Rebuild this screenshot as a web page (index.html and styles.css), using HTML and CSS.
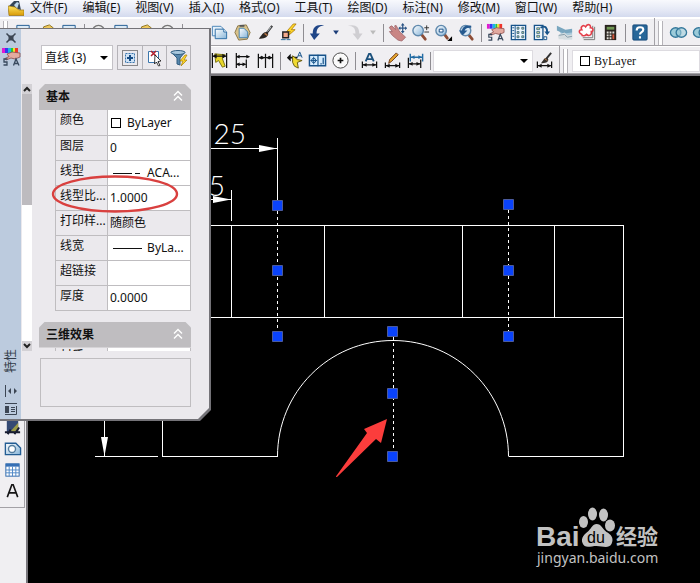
FILE: index.html
```html
<!DOCTYPE html>
<html lang="zh-CN">
<head>
<meta charset="utf-8">
<title>CAD</title>
<link rel="stylesheet" href="styles.css">
</head>
<body>
<svg class="defs" aria-hidden="true">
  <defs>
    <linearGradient id="gBlue" x1="0" y1="0" x2="1" y2="1"><stop offset="0" stop-color="#fff"/><stop offset="1" stop-color="#86b4d8"/></linearGradient>
    <linearGradient id="gGold" x1="0" y1="0" x2="0" y2="1"><stop offset="0" stop-color="#ffe45c"/><stop offset="1" stop-color="#d89a08"/></linearGradient>
  </defs>
  <symbol id="i-new" viewBox="0 0 20 20"><path d="M3 2.500h13v13H3z" fill="#dceaf5" stroke="#1f5b91"/></symbol>
  <symbol id="i-open" viewBox="0 0 20 20"><path d="M7 4l6-2 4 3-5 10H4z" fill="#f0c95c" stroke="#8e7420"/></symbol>
  <symbol id="i-round" viewBox="0 0 20 20"><circle cx="10" cy="9" r="6.500" fill="#eee" stroke="#777" stroke-width="1.500"/></symbol>
  <symbol id="i-copy" viewBox="0 0 20 20"><path d="M2.500 3.500h9l2 2v8h-11z" fill="#e4f0fa" stroke="#4b84b5"/><path d="M5.500 6.500h9l3 3v7h-12z" fill="url(#gBlue)" stroke="#2a6ba3"/><path d="M14.500 6.500v3h3" fill="#fff" stroke="#2a6ba3"/></symbol>
  <symbol id="i-paste" viewBox="0 0 20 20"><path d="M5 3l9-1 4 8-3 7-9 1-4-8z" fill="#d9c28a" stroke="#8a7544"/><path d="M6.500 5.500h5l4 4v6h-9z" fill="url(#gBlue)" stroke="#4280ae"/><path d="M7 3h5" stroke="#555" stroke-width="2"/></symbol>
  <symbol id="i-brush" viewBox="0 0 20 20"><path d="M17 3l-6 8" stroke="#333" stroke-width="2.200"/><path d="M16 4l-4 5" stroke="#c8d0d8"/><path d="M12 9.500c-4-1-6 3-9 7 5 0 9-1 10-5z" fill="#2c2623"/><path d="M9 11l3 2" stroke="#b57343" stroke-width="1.500"/></symbol>
  <symbol id="i-match" viewBox="0 0 20 20"><path d="M15 1L8 9h4l-3 5 8-7h-4l5-6z" fill="#ffd82a" stroke="#a87400" stroke-width=".8"/><path d="M4 9.500h6v6H4z" fill="#f4aa8b" stroke="#222" stroke-width="1.500"/><path d="M2 17.500h5M8 17.500h4" stroke="#276c9d"/></symbol>
  <symbol id="i-undo" viewBox="0 0 20 20"><path d="M17 2.500C11 3 9 6 9 11H12.500L6.500 18 2 11h3C5 4 9 1 17 2.500z" fill="#1f4587"/></symbol>
  <symbol id="i-redo" viewBox="0 0 20 20"><path d="M3 3c6 0 8 3 8 8H8l5.500 7 5-7H15C15 4 11 1 3 3z" fill="#cfced2"/></symbol>
  <symbol id="i-caret" viewBox="0 0 10 20"><path d="M2 8h6l-3 4z" fill="currentColor"/></symbol>
  <symbol id="i-pan" viewBox="0 0 20 20"><path d="M2 4l2-1 4 4-1-4 1.500-.5 3 5.500 1.500 2 2.500 2 3 3-4 4-4-1-6-5-3-4h3l-3-4z" fill="#c98685" stroke="#9a6066" stroke-width=".8"/><path d="M15.500 1.500v8M11.500 5.500h8" stroke="#2d5585" stroke-width="1.300"/><path d="M15.500 0l2 2.500h-4zM15.500 11l2-2.500h-4zM20 5.500l-2-2v4zM11 5.500l2-2v4z" fill="#2d5585"/></symbol>
  <symbol id="i-zoom" viewBox="0 0 20 20"><path d="M11 12l4 5" stroke="#8d4d36" stroke-width="3" stroke-linecap="round"/><circle cx="7.500" cy="8" r="5.500" fill="url(#gBlue)" stroke="#6089ad" stroke-width="1.500"/><path d="M14 5h5M16.500 2.500v5M14 9.500h5" stroke="#333"/></symbol>
  <symbol id="i-zoomwin" viewBox="0 0 20 20"><path d="M11 12l3 4" stroke="#8d4d36" stroke-width="3" stroke-linecap="round"/><circle cx="7.500" cy="8" r="5.500" fill="url(#gBlue)" stroke="#6089ad" stroke-width="1.500"/><path d="M5.500 6.500h4v3h-4z" fill="#fff" stroke="#174d86"/><path d="M19 14v5h-5z" fill="#000"/></symbol>
  <symbol id="i-zoomprev" viewBox="0 0 20 20"><path d="M12 12l4 5" stroke="#8d4d36" stroke-width="3" stroke-linecap="round"/><circle cx="9" cy="8" r="5.500" fill="#d7e7f4" stroke="#6089ad" stroke-width="1.500"/><path d="M15 3C9 2 6 4 5 8H2l4 5 5-5H8c1-3 4-3 7-3z" fill="#24598f"/></symbol>
  <symbol id="i-props" viewBox="0 0 20 20"><path d="M1 1h3v5H1z" fill="#e11bd0"/><path d="M4 1h3v5H4z" fill="#3737f0"/><path d="M7 1h3v5H7z" fill="#16b7e8"/><path d="M10 1h2v5h-2z" fill="#28c936"/><path d="M12 1h2v5h-2z" fill="#f3e02c"/><path d="M14 1h3v5h-3z" fill="#f0342a"/><path d="M6 7l5-2 8 1v4l-5 2-4-1-5 2-1-1.500 4-2z" fill="#e3aaa0" stroke="#8c4b49" stroke-width=".8"/><path d="M6.500 12H3v3h3v3H2.500M12.500 18.500l2.500-6.500 3 6.500M13.500 16.500h4" fill="none" stroke="#38495d" stroke-width="1.300"/></symbol>
  <symbol id="i-design" viewBox="0 0 20 20"><path d="M2.500 2.500h15v15h-15z" fill="#edf5fb" stroke="#17538a" stroke-width="1.400"/><path d="M6.500 2v16" stroke="#17538a"/><path d="M3.500 5h2M3.500 8h2M3.500 11h2M3.500 14h2" stroke="#17538a"/><path d="M8.500 4.500h2v2h-2zM13.500 4.500h2v2h-2zM8.500 9h2v2h-2zM13.500 9h2v2h-2zM8.500 13.500h2v2h-2zM13.500 13.500h2v2h-2z" fill="#d5df93" stroke="#346184" stroke-width=".9"/></symbol>
  <symbol id="i-tool" viewBox="0 0 20 20"><path d="M2.500 2.500h9v15h-9z" fill="#edf5fb" stroke="#17538a" stroke-width="1.400"/><path d="M5 5h3v2H5zM5 9h3v2H5zM5 13h3v2H5z" fill="#d5df93" stroke="#346184" stroke-width=".8"/><path d="M9 5c5-3 7 0 7 5" fill="none" stroke="#17538a" stroke-width="2"/><path d="M13 9h6l-3 4z" fill="#17538a"/><path d="M12.500 14.500h3v3h-3z" fill="#fff" stroke="#17538a"/></symbol>
  <symbol id="i-sheet" viewBox="0 0 20 20"><path d="M2 3l7 5h9v9H9z" fill="#a8c9da"/><path d="M2 3l9 4 7-1v4l-9 1-7-3z" fill="#79a6bf"/><path d="M3 13l7-3 3 3 5-1v5H4z" fill="#d6dde0"/><path d="M4 13l6-1 3 3 5-1" fill="none" stroke="#829aa8"/></symbol>
  <symbol id="i-cloud" viewBox="0 0 20 20"><path d="M6 17.500h11.500V4M5 15.500h10.500V3" fill="none" stroke="#777"/><path d="M4 12c-4-2-3-5 0-5-2-3 2-6 4-3 2-4 6-2 5 1 4 0 3 4 1 4 1 4-3 5-5 3-2 2-5 2-5 0z" fill="#fff" stroke="#e33d48" stroke-width="1.600"/></symbol>
  <symbol id="i-calc" viewBox="0 0 20 20"><path d="M4 2h12v16H4z" fill="#29231f"/><path d="M6 4h8v3H6z" fill="#6f9653"/><path d="M6 9h2v2H6zM9 9h2v2H9zM12 9h2v2h-2zM6 12h2v2H6zM9 12h2v2H9zM6 15h2v2H6zM9 15h2v2H9z" fill="#e2dfd9"/><path d="M12 12h2v5h-2z" fill="#d0553c"/></symbol>
  <symbol id="i-help" viewBox="0 0 20 20"><rect x="3" y="2" width="15" height="16" rx="1" fill="#276799" stroke="#164a7a"/><path d="M7 8c0-5 7-4 7-1 0 2.500-3.500 2.500-3.500 5M10.500 14v2.200" fill="none" stroke="#fff" stroke-width="2.200"/></symbol>
  <symbol id="i-union" viewBox="0 0 20 20"><ellipse cx="7" cy="10" rx="5.500" ry="5" fill="#9ccbd9" stroke="#34789b" stroke-width="1.400"/><ellipse cx="13" cy="10" rx="5.500" ry="5" fill="#9ccbd9" fill-opacity=".6" stroke="#34789b" stroke-width="1.400"/></symbol>
  <symbol id="i-quick" viewBox="0 0 20 20"><path d="M5 3l11 1-3 4 3 8-3 1-4-7-3 2z" fill="#e8d728" stroke="#777112"/><path d="M2.500 2v16M17.500 2v16M3 5.500h14" stroke="#111" stroke-width="1.300"/><path d="M3 5.500l4-2.500v5zM17 5.500l-4-2.500v5z" fill="#111"/></symbol>
  <symbol id="i-base" viewBox="0 0 20 20"><path d="M3.500 2v16M14 9v9M3 6h14M3 14h10" stroke="#111" stroke-width="1.300"/><path d="M3 6l4-2v4zM18 6l-4-2v4zM3 14l4-2v4zM14 14l-4-2v4z" fill="#111"/></symbol>
  <symbol id="i-cont" viewBox="0 0 20 20"><path d="M2.500 3v15M10 3v15M17.500 3v15M3 7h14" stroke="#111" stroke-width="1.300"/><path d="M3 7l3-2v4zM9 7L6 5v4zM11 7l3-2v4zM17 7l-3-2v4z" fill="#111"/></symbol>
  <symbol id="i-leader" viewBox="0 0 20 20"><path d="M2 7l4-4v3h7v2H6v3z" fill="#111"/><path d="M8 5l5 4 5 1-5 2 1 6-4-2-2-4z" fill="#f1db31" stroke="#665b11"/><path d="M13 7l2.500-6L18 7M14 5h3" fill="none" stroke="#17538a"/></symbol>
  <symbol id="i-tol" viewBox="0 0 20 20"><path d="M1.500 4.500h17v11h-17z" fill="#d6edff" stroke="#17538a" stroke-width="1.500"/><path d="M10.500 4v12M13 13.500h1.500M16 7v7" stroke="#17538a" stroke-width="1.300"/><circle cx="6" cy="10" r="2.300" fill="none" stroke="#17538a"/><path d="M2.500 10h7M6 6v8" stroke="#17538a"/></symbol>
  <symbol id="i-center" viewBox="0 0 20 20"><circle cx="10" cy="10" r="8" fill="#fafafa" stroke="#444"/><path d="M7 10h6M10 7v6" stroke="#111" stroke-width="1.800"/></symbol>
  <symbol id="i-dimtext" viewBox="0 0 20 20"><path d="M6 11L9.500 3h1.500L14.500 11M7 8.500h6" fill="none" stroke="#1d527d" stroke-width="2"/><path d="M2.500 11v7M17.500 11v7M3 14.500h14" stroke="#111" stroke-width="1.300"/><path d="M3 14.500l4-2v4zM17 14.500l-4-2v4z" fill="#111"/></symbol>
  <symbol id="i-dimedit" viewBox="0 0 20 20"><path d="M2.500 12v6M17.500 12v6M3 15.500h14" stroke="#111" stroke-width="1.300"/><path d="M3 15.500l4-2v4zM17 15.500l-4-2v4z" fill="#111"/><path d="M6 13l1-4 7-7 2 2-7 7z" fill="#e3a32c" stroke="#6f3c1e"/></symbol>
  <symbol id="i-dimupd" viewBox="0 0 20 20"><path d="M4.500 3v8M17.500 3v8M5 6.500h12" stroke="#236ca3" stroke-width="1.500"/><path d="M5 6.500l4-2v4zM17 6.500l-4-2v4z" fill="#236ca3"/><path d="M2.500 7v11M15.500 9v9M3 13.500h12" stroke="#111" stroke-width="1.300"/><path d="M3 13.500l4-2v4zM15 13.500l-4-2v4z" fill="#111"/></symbol>
  <symbol id="i-dimstyle" viewBox="0 0 20 20"><path d="M2.500 11v7M17.500 11v7M3 15.500h14" stroke="#111" stroke-width="1.300"/><path d="M3 15.500l4-2v4zM17 15.500l-4-2v4z" fill="#111"/><path d="M17 2l-5 6" stroke="#333" stroke-width="2"/><path d="M13 7c-4 0-4 3-7 6 5 0 8-1 8-4z" fill="#34302d"/><path d="M10 8l3 2" stroke="#bf824d"/></symbol>
  <symbol id="i-hatch" viewBox="0 0 20 20"><path d="M4 2h12v13H4z" fill="#354a74"/><path d="M8 14l8-9v10z" fill="#9b9b48"/><path d="M2 15h16M5 17l3-5M12 17l5-7" stroke="#171c30" stroke-width="2"/></symbol>
  <symbol id="i-region" viewBox="0 0 20 20"><path d="M2.500 4.500h11l5 5v7h-16z" fill="url(#gBlue)" stroke="#235d93" stroke-width="1.400"/><circle cx="9.500" cy="10.500" r="3.700" fill="#fff" stroke="#547d9f" stroke-width="1.500"/></symbol>
  <symbol id="i-table" viewBox="0 0 20 20"><rect x="3" y="4" width="14" height="13" fill="#fff" stroke="#2d66a9"/><path d="M3 4h14v3H3z" fill="#356fb5"/><path d="M3 10.500h14M3 13.500h14M6.500 7v10M10 7v10M13.500 7v10" stroke="#4f87c6"/></symbol>
  <symbol id="i-text" viewBox="0 0 20 20"><path d="M4.500 17L9.300 4h1.400L15.500 17M6 12.500h8" fill="none" stroke="#151515" stroke-width="1.700"/></symbol>
</svg>

<header>
  <nav class="menubar">
    <svg class="logo" viewBox="0 0 16 15" aria-hidden="true"><path d="M1 5L6 0h5l2 9z" fill="#344557"/><path d="M6 4l3-3 2 1-2 6z" fill="#bed8ec"/><path d="M0 5l7 1 4 3h5v5.500H1z" fill="url(#gGold)" stroke="#9a7310" stroke-width=".7"/></svg>
    <a href="#">文件(F)</a><a href="#">编辑(E)</a><a href="#">视图(V)</a><a href="#">插入(I)</a><a href="#">格式(O)</a><a href="#">工具(T)</a><a href="#">绘图(D)</a><a href="#">标注(N)</a><a href="#">修改(M)</a><a href="#">窗口(W)</a><a href="#">帮助(H)</a>
  </nav>
  <div class="toolrow">
    <div class="toolbar">
      <span class="grip"></span>
      <button aria-label="新建"><svg><use href="#i-new"/></svg></button>
      <button aria-label="打开"><svg><use href="#i-open"/></svg></button>
      <button aria-label="保存"><svg><use href="#i-new"/></svg></button>
      <span class="sep"></span>
      <button aria-label="打印"><svg><use href="#i-round"/></svg></button>
      <button aria-label="打印预览"><svg><use href="#i-new"/></svg></button>
      <button aria-label="发布"><svg><use href="#i-open"/></svg></button>
      <button aria-label="三维"><svg><use href="#i-round"/></svg></button>
      <span class="sep"></span>
      <button aria-label="剪切"></button>
      <button aria-label="复制"><svg><use href="#i-copy"/></svg></button>
      <button aria-label="粘贴"><svg><use href="#i-paste"/></svg></button>
      <button aria-label="特性匹配"><svg><use href="#i-brush"/></svg></button>
      <button aria-label="块编辑器"><svg><use href="#i-match"/></svg></button>
      <span class="sep"></span>
      <button aria-label="放弃"><svg><use href="#i-undo"/></svg></button>
      <button class="drop" aria-label="放弃列表"><svg><use href="#i-caret"/></svg></button>
      <button aria-label="重做"><svg><use href="#i-redo"/></svg></button>
      <button class="drop off" aria-label="重做列表"><svg><use href="#i-caret"/></svg></button>
      <span class="sep"></span>
      <button aria-label="平移"><svg><use href="#i-pan"/></svg></button>
      <button aria-label="缩放"><svg><use href="#i-zoom"/></svg></button>
      <button aria-label="窗口缩放"><svg><use href="#i-zoomwin"/></svg></button>
      <button aria-label="缩放上一个"><svg><use href="#i-zoomprev"/></svg></button>
      <span class="sep"></span>
      <button aria-label="特性"><svg><use href="#i-props"/></svg></button>
      <button aria-label="设计中心"><svg><use href="#i-design"/></svg></button>
      <button aria-label="工具选项板"><svg><use href="#i-tool"/></svg></button>
      <button aria-label="图纸集"><svg><use href="#i-sheet"/></svg></button>
      <button aria-label="标记集"><svg><use href="#i-cloud"/></svg></button>
      <button aria-label="计算器"><svg><use href="#i-calc"/></svg></button>
      <span class="sep"></span>
      <button aria-label="帮助"><svg><use href="#i-help"/></svg></button>
    </div>
    <div class="toolbar grow">
      <span class="grip"></span>
      <button aria-label="并集"><svg><use href="#i-union"/></svg></button>
      <button aria-label="差集"><svg><use href="#i-union"/></svg></button>
    </div>
  </div>
  <div class="toolrow">
    <div class="toolbar dims">
      <button aria-label="快速标注"><svg><use href="#i-quick"/></svg></button>
      <button aria-label="基线"><svg><use href="#i-base"/></svg></button>
      <button aria-label="连续"><svg><use href="#i-cont"/></svg></button>
      <span class="sep"></span>
      <button aria-label="引线"><svg><use href="#i-leader"/></svg></button>
      <button aria-label="公差"><svg><use href="#i-tol"/></svg></button>
      <button aria-label="圆心标记"><svg><use href="#i-center"/></svg></button>
      <span class="sep"></span>
      <button aria-label="编辑标注"><svg><use href="#i-dimtext"/></svg></button>
      <button aria-label="编辑标注文字"><svg><use href="#i-dimedit"/></svg></button>
      <button aria-label="标注更新"><svg><use href="#i-dimupd"/></svg></button>
      <span class="sep"></span>
      <select class="dimselect" aria-label="标注样式控制"><option></option></select>
      <button aria-label="标注样式"><svg><use href="#i-dimstyle"/></svg></button>
    </div>
    <div class="toolbar grow">
      <span class="grip"></span>
      <button class="colorbox"><span class="swatch"></span>ByLayer</button>
    </div>
  </div>
</header>

<main>
  <aside class="side">
    <div class="sidebar">
      <button aria-label="图案填充"><svg><use href="#i-hatch"/></svg></button>
      <button aria-label="面域"><svg><use href="#i-region"/></svg></button>
      <button aria-label="表格"><svg><use href="#i-table"/></svg></button>
      <button aria-label="多行文字"><svg><use href="#i-text"/></svg></button>
    </div>
  </aside>
  <svg class="canvas" viewBox="28 76 672 507" preserveAspectRatio="xMinYMin meet" role="img" aria-label="图形">
    <g class="line">
      <path d="M200 148.500h77M277.500 138v62M200 199.500h31M231.500 190v31"/>
      <path d="M200 225.500h423.500v231H508.500M200 317.500h423.500M231.500 225v92M324.500 225v92M462.500 225v92M554.500 225v92"/>
      <path d="M162.500 410v46.500h115M104.500 410v46M95 456.500h63"/>
      <path d="M277.500 456.500C277.500 392 329 340.500 393 340.500S508.500 392 508.500 456.500" shape-rendering="auto"/>
      <path class="dash" d="M277.500 205v131M508.500 204v132M393.500 331v125"/>
    </g>
    <g fill="#fff"><path d="M259 145v7l18-3.500zM213 196v7l18-3.500zM101 437h7l-3.500 19z"/></g>
    <text class="dimtext" x="246" y="144" text-anchor="end">25</text>
    <text class="dimtext" x="225" y="196" text-anchor="end">15</text>
    <g class="handles">
      <path d="M272.500 200.500h10v10h-10zM272.500 265.500h10v10h-10zM272.500 331.500h10v10h-10zM503.500 199.500h10v10h-10zM503.500 265.500h10v10h-10zM503.500 331.500h10v10h-10zM387.500 326.500h10v10h-10zM387.500 388.500h10v10h-10zM387.500 451.500h10v10h-10z"/>
    </g>
    <path d="M387 419l-6 24-5-4-39 38q-2 0 0-2l30-42-3-4z" fill="#fb3d3c"/>
    <g class="mark">
      <text class="bai" x="536" y="546">Bai</text>
      <ellipse cx="583.500" cy="522" rx="4.500" ry="6"/><ellipse cx="592.500" cy="514" rx="4.500" ry="6.500"/><ellipse cx="603.500" cy="515" rx="4.500" ry="6.500"/><ellipse cx="610" cy="525.500" rx="5" ry="6"/>
      <path d="M596.500 524c5 0 6 5 10 8 4 2 8 6 5 12-3 5-9 2-15 2s-12 3-14-3c-2-5 2-9 6-12 3-3 4-7 8-7z"/>
      <text class="du" x="587" y="543">du</text>
      <text class="jy" x="616" y="544">经验</text>
      <text class="url" x="537" y="563">jingyan.baidu.com</text>
    </g>
  </svg>
</main>

<section class="palette" aria-label="特性">
  <div class="palette-in">
    <div class="strip">
      <button aria-label="关闭"><svg viewBox="0 0 14 14"><path d="M2.500 2.500l9 9M11.500 2.500l-9 9" stroke="#3c4654" stroke-width="1.500"/><path d="M4.500 4.500h5v5h-5z" fill="#3c4654"/></svg></button>
      <svg class="strip-props"><use href="#i-props"/></svg>
      <span class="strip-title">特性</span>
      <button aria-label="自动隐藏"><svg viewBox="0 0 14 14"><path d="M1.500 1v12" stroke="#3c4654"/><path d="M4 7l3-3v6zM13 7l-3-3v6z" fill="#3c4654"/></svg></button>
      <button aria-label="菜单"><svg viewBox="0 0 14 14"><path d="M1 1.500h12M1 12.500h11.500V4M7 5.500h4M7 7.500h4M7 9.500h4" fill="none" stroke="#3c4654"/><path d="M1 4h4v7H1z" fill="#3c4654"/></svg></button>
    </div>
    <div class="panel">
      <div class="pick">
        <select class="objselect" aria-label="对象"><option>直线 (3)</option></select>
        <div class="pickbtns">
          <button aria-label="切换"><svg viewBox="0 0 18 18"><path d="M1.500 1.500h15v15h-15z" fill="none" stroke="#222" stroke-dasharray="1 1"/><path d="M4.500 4.500h9v9h-9z" fill="#cfe2f5" stroke="#3b76ac" stroke-dasharray="2 1"/><path d="M6 9h6M9 6v6" stroke="#174c83" stroke-width="2"/></svg></button>
          <button aria-label="选择对象"><svg viewBox="0 0 18 18"><path d="M2.500 2.500h10v11h-10z" fill="#fff" stroke="#3b76ac"/><path d="M5 2l5 5M10 2L5 7" stroke="#b3202c" stroke-width="1.500"/><path d="M9 6l6 6-3 .500 2 4-1.500.500-2-4-2 2z" fill="#fff" stroke="#111" stroke-width=".8"/></svg></button>
          <button aria-label="快速选择"><svg viewBox="0 0 18 18"><path d="M1 3h14l-5 6v7l-3-1V9z" fill="#5686ac" stroke="#315c80"/><ellipse cx="8" cy="3.500" rx="7" ry="2" fill="#a9c8de" stroke="#315c80"/><path d="M15 6l-5 6h3l-2 5 6-6h-3l3-5z" fill="#ffd82a" stroke="#a57d0a" stroke-width=".7"/></svg></button>
        </div>
      </div>
      <div class="scroller">
        <div class="scrollbar" aria-hidden="true">
          <span class="arrow"><svg viewBox="0 0 10 10"><path d="M2 7l3-3 3 3" fill="none" stroke="#222" stroke-width="2"/></svg></span>
          <span class="thumb"></span>
          <span class="arrow"><svg viewBox="0 0 10 10"><path d="M2 3l3 3 3-3" fill="none" stroke="#222" stroke-width="2"/></svg></span>
        </div>
        <div class="groups">
          <h2>基本<svg viewBox="0 0 10 12"><path d="M1 5.500l4-4 4 4M1 10.500l4-4 4 4" fill="none" stroke="#fff" stroke-width="1.400"/></svg></h2>
          <table>
            <tr><th>颜色</th><td><span class="swatch"></span>ByLayer</td></tr>
            <tr><th>图层</th><td>0</td></tr>
            <tr><th>线型</th><td><svg class="sample" viewBox="0 0 32 10"><path d="M3 5.500h19M25 5.500h5" stroke="#111"/></svg> ACA...</td></tr>
            <tr><th>线型比...</th><td>1.0000</td></tr>
            <tr><th>打印样...</th><td class="ro">随颜色</td></tr>
            <tr><th>线宽</th><td><svg class="sample" viewBox="0 0 32 10"><path d="M3 5.500h31" stroke="#111"/></svg> ByLa...</td></tr>
            <tr><th>超链接</th><td></td></tr>
            <tr><th>厚度</th><td>0.0000</td></tr>
          </table>
          <h2>三维效果<svg viewBox="0 0 10 12"><path d="M1 5.500l4-4 4 4M1 10.500l4-4 4 4" fill="none" stroke="#fff" stroke-width="1.400"/></svg></h2>
          <table class="cut">
            <tr><th>材质</th><td></td></tr>
          </table>
        </div>
      </div>
      <div class="desc"></div>
    </div>
  </div>
  <svg class="ring" viewBox="0 0 128 40" aria-hidden="true"><ellipse cx="64" cy="20" rx="62" ry="17.500" fill="none" stroke="#d9403f" stroke-width="2.400"/></svg>
</section>
</body>
</html>
```
FILE: styles.css
```css
* { box-sizing: border-box; }

html, body { height: 100%; }

body {
  margin: 0;
  display: flex;
  flex-direction: column;
  position: relative;
  overflow: hidden;
  background: #f0eff2;
  color: #111;
  font: 12px/16px "Noto Sans", "Noto Sans CJK SC", sans-serif;
}

button {
  margin: 0;
  padding: 0;
  border: 0;
  background: none;
  font: inherit;
  color: inherit;
}

.defs { position: absolute; width: 0; height: 0; }

/* menu and toolbars */
.menubar {
  display: flex;
  align-items: center;
  gap: 15px;
  height: 18px;
  padding: 0 0 1px 8px;
  background: linear-gradient(#f8f9fd, #e4e8f5 60%, #d3daee);
  border-bottom: 1px solid #fff;
}
.menubar a { color: #111; text-decoration: none; white-space: nowrap; }
.logo { width: 16px; height: 15px; margin-right: -9px; flex: none; }

.toolrow { display: flex; height: 28px; }
.toolbar {
  display: flex;
  align-items: center;
  flex: none;
  padding-top: 2px;
  padding-right: 3px;
  border: solid #a3a1a6;
  border-width: 0 1px 1px 0;
  background: #f0eff2;
  box-shadow: inset 0 1px #fff;
}
.toolbar.grow { flex: 1; overflow: hidden; border-right: 0; padding-right: 0; }
.toolbar button { width: 23px; height: 24px; flex: none; display: grid; place-items: center; }
.toolbar svg { width: 19px; height: 19px; }
.toolbar .drop { width: 14px; color: #1b3d78; }
.toolbar .drop svg { width: 10px; }
.toolbar .off { color: #bbb; }
.dims { padding-left: 208px; }

.grip {
  width: 5px;
  height: 24px;
  margin: 0 4px 0 3px;
  flex: none;
  border: solid #b5b3b8;
  border-width: 0 1px;
  background: #fff;
}
.sep { width: 1px; height: 18px; margin: 0 2px 0 3px; background: #8f8d92; flex: none; }

select { appearance: none; border: 0; border-radius: 0; font: inherit; color: inherit; }
.dimselect, .objselect {
  background: #fff url("data:image/svg+xml,%3Csvg xmlns='http://www.w3.org/2000/svg' width='8' height='4'%3E%3Cpath d='M0 0h8L4 4z'/%3E%3C/svg%3E") no-repeat right 4px center;
}
.dimselect { width: 100px; height: 22px; border: 1px solid #dddbe0; }
.toolbar .colorbox {
  flex: 1;
  height: 22px;
  display: flex;
  align-items: center;
  padding-left: 7px;
  gap: 4px;
  background: #fff;
  border: 1px solid #dddbe0;
  font: 12px/16px "Liberation Serif", serif;
}
.swatch { display: inline-block; width: 10px; height: 10px; border: 1px solid #000; background: #fff; }

/* work area */
main {
  flex: 1;
  min-height: 0;
  display: flex;
  border-top: 2px solid #77757a;
}
.side { width: 28px; flex: none; border-right: 2px solid #77757a; }
.sidebar {
  width: 25px;
  min-height: 432px;
  display: flex;
  flex-direction: column;
  justify-content: flex-end;
  align-items: center;
  padding-bottom: 6px;
  border: solid #a3a1a6;
  border-width: 0 1px 1px 0;
}
.sidebar button { width: 23px; height: 21px; display: grid; place-items: center; }
.sidebar svg { width: 19px; height: 19px; }

.canvas { flex: 1; min-width: 0; height: 100%; background: #000; }
.line { fill: none; stroke: #fff; stroke-width: 1; shape-rendering: crispEdges; }
.dash { stroke-dasharray: 3 3; }
.dimtext { font: 300 28px Lato, sans-serif; fill: #fff; }
.handles { fill: #0a43fb; stroke: #4b5b9c; }
.mark { fill: #c2c2c2; }
.bai { font: 700 28px "Liberation Sans", sans-serif; }
.du { font: 16px "Liberation Sans", sans-serif; fill: #000; }
.jy { font: 700 21px "Noto Sans CJK SC", sans-serif; }
.url { font: 14px "Noto Sans", sans-serif; }

/* floating properties palette */
.palette {
  position: absolute;
  left: 0;
  top: 28px;
  width: 211px;
  height: 393px;
  padding: 1px 2px 2px 0;
  background: #747378;
  clip-path: polygon(0 0, 100% 0, 100% 382px, 200px 100%, 0 100%);
}
.palette-in {
  height: 100%;
  display: flex;
  background: #ebe9ed;
  clip-path: polygon(0 0, 100% 0, 100% 379px, 198px 100%, 0 100%);
}
.strip {
  width: 21px;
  flex: none;
  display: flex;
  flex-direction: column;
  align-items: center;
  padding: 0 0 1px;
  background: #bccbde;
}
.strip svg { width: 14px; height: 14px; display: block; }
.strip .strip-props { width: 20px; height: 20px; }
.strip button { padding: 2px 0; }
.strip-title {
  margin: auto 0 9px;
  writing-mode: vertical-rl;
  text-orientation: sideways;
  transform: rotate(180deg);
  color: #333c48;
}

.panel { flex: 1; min-width: 0; display: flex; flex-direction: column; padding: 16px 18px 12px 1px; }
.pick { display: flex; justify-content: space-between; margin: 0 0 14px 19px; }
.objselect { width: 72px; height: 25px; padding-left: 3px; border: 1px solid #c4c2c7; }
.pickbtns { display: flex; border: 1px solid #b5b3b8; }
.pickbtns button { width: 24px; height: 23px; display: grid; place-items: center; }
.pickbtns button + button { border-left: 1px solid #b5b3b8; }
.pickbtns svg { width: 18px; height: 18px; }

.scroller { flex: 1; min-height: 0; display: flex; gap: 7px; overflow: hidden; }
.scrollbar { width: 10px; flex: none; display: flex; flex-direction: column; background: #fff; }
.arrow { height: 10px; background: #d3d1d5; }
.arrow svg { display: block; width: 10px; height: 10px; }
.thumb { height: 111px; margin-bottom: auto; background: #bdbbbf; }

.groups { flex: 1; min-width: 0; overflow: hidden; }
h2 {
  display: flex;
  align-items: center;
  justify-content: space-between;
  height: 26px;
  margin: 0;
  padding: 0 8px 2px 7px;
  font: 700 12px/16px "Noto Sans CJK SC", sans-serif;
  background: #bfbdc0;
  clip-path: polygon(0 6px, 6px 0, calc(100% - 6px) 0, 100% 6px, 100% 100%, 0 100%);
}
h2 svg { width: 10px; height: 12px; }
table {
  width: calc(100% - 16px);
  margin: 0 0 11px 16px;
  table-layout: fixed;
  border-collapse: collapse;
}
tr { height: 25px; }
th, td {
  padding: 0;
  border: 1px solid #bfbdc0;
  white-space: nowrap;
  overflow: hidden;
}
tr:first-child th, tr:first-child td { border-top: 0; }
th { width: 52px; padding: 0 0 4px 4px; text-align: left; font-weight: 400; }
.cut th { padding-bottom: 9px; }
td { padding: 1px 0 0 2px; background: #fff; }
td .swatch { margin: 0 6px 0 1px; vertical-align: -1px; }
td.ro { background: #ebe9ed; }
.sample { width: 32px; height: 10px; margin-right: 2px; vertical-align: -1px; }
.desc { height: 49px; margin: 7px 0 0 18px; border: 1px solid #bfbdc0; }

.ring { position: absolute; left: 51px; top: 146px; width: 128px; height: 40px; }
```
